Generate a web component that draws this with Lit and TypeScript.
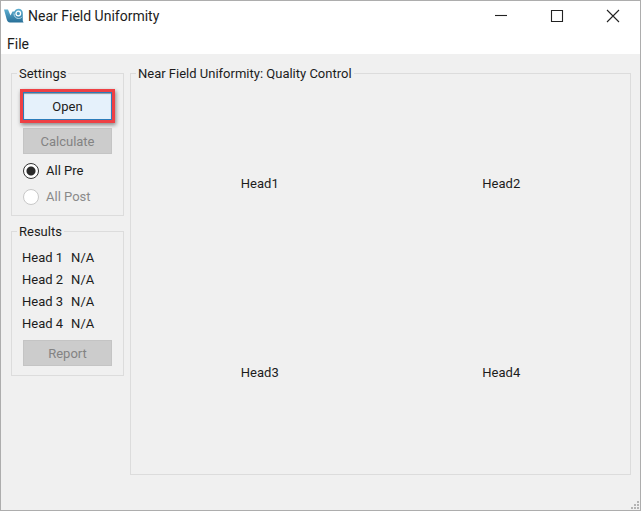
import { LitElement, html, css, svg } from "lit";
import { customElement, state } from "lit/decorators.js";

type Pass = "pre" | "post";

@customElement("app-root")
export class AppRoot extends LitElement {
  static styles = css`
    :host {
      display: block;
      color: #1c1c1c;
      font: 13px/18px Roboto, "Noto Sans", sans-serif;
    }
    .window {
      box-sizing: border-box;
      min-height: 100vh;
      display: flex;
      flex-direction: column;
      border: 1px solid #adadad;
      background: #f0f0f0;
    }
    .titlebar {
      display: flex;
      align-items: center;
      height: 30px;
      padding-left: 3px;
      background: #fff;
    }
    .logo {
      width: 20px;
      height: 16px;
      margin-right: 4px;
    }
    .title {
      flex: 1;
      margin: 0;
      font-size: 14px;
      font-weight: 400;
      line-height: 20px;
    }
    .caption {
      box-sizing: border-box;
      width: 56px;
      height: 30px;
      padding: 0 0 0 2px;
      border: 0;
      background: none;
      display: grid;
      place-items: center;
    }
    .menubar {
      height: 23px;
      padding-left: 6px;
      background: #fff;
    }
    .menu {
      padding: 0;
      border: 0;
      background: none;
      color: inherit;
      font: inherit;
      font-size: 14px;
      line-height: 26px;
    }
    .content {
      flex: 1;
      display: flex;
      gap: 6px;
      padding: 9px 9px 0 10px;
    }
    .sidebar {
      width: 113px;
      flex: none;
      display: flex;
      flex-direction: column;
      gap: 5px;
    }
    .group {
      margin: 0;
      min-width: 0;
      border: 1px solid #dcdcdc;
      padding: 9px 11px;
    }
    .settings {
      padding-bottom: 5px;
    }
    .legend {
      margin-left: -6px;
      padding: 2px 2px 0;
    }
    .viewer {
      flex: 1;
      display: grid;
      grid-template: 1fr 1fr / 1fr 1fr;
      gap: 6px;
    }
    .head {
      display: grid;
      place-items: center;
    }
    .button {
      display: block;
      box-sizing: border-box;
      width: 100%;
      height: 26px;
      padding: 2px 0 0;
      border: 1px solid #c4c4c4;
      background: #cccccc;
      color: #838383;
      font: inherit;
    }
    .open {
      height: 28px;
      margin-bottom: 8px;
      border-color: #2b7cba;
      background: #e5f1fb;
      color: #1c1c1c;
      outline: 3px solid #ee4044;
      box-shadow: 1px 2px 4px 3px #00000070, inset 0 1px 1px #00000060;
    }
    .radios {
      margin-top: 4px;
    }
    .radio {
      display: flex;
      align-items: center;
      gap: 7px;
      height: 26px;
    }
    .radio.off {
      color: #8a8a8a;
    }
    .dot {
      appearance: none;
      box-sizing: border-box;
      width: 16px;
      height: 16px;
      margin: 0;
      border: 1px solid #333;
      border-radius: 50%;
      background: #fff;
    }
    .dot:checked {
      background: radial-gradient(circle, #2a2a2a 4px, #fff 5px);
    }
    .dot:disabled {
      border-color: #c8c8c8;
    }
    .results {
      margin: -3px 0 5px -1px;
      border-collapse: collapse;
    }
    .results th,
    .results td {
      height: 22px;
      padding: 0 8px 0 0;
      font-weight: 400;
      text-align: left;
    }
    .status {
      height: 35px;
      display: flex;
      align-items: flex-end;
      justify-content: flex-end;
    }
    .grip {
      width: 10px;
      height: 10px;
    }
  `;

  @state() private pass: Pass = "pre";

  private results = [1, 2, 3, 4].map((n) => ({ n, value: "N/A" }));

  private logo() {
    return svg`<svg class="logo" viewBox="0 0 20 16" aria-hidden="true">
      <defs>
        <linearGradient id="blue" x1="0" y1="0" x2="0" y2="1">
          <stop offset="0" stop-color="#5fb0d2"></stop>
          <stop offset="1" stop-color="#286f98"></stop>
        </linearGradient>
      </defs>
      <path fill="url(#blue)" d="M0 1.500h4l2.500 6L8.500 3.500h1.800C11 2 12.500 .8 14.500 .8c2.700 0 4.300 1.700 4.300 4.200v8l.8 1.500H6C4 14.500 3.200 13 2.600 11z"></path>
      <circle cx="14.300" cy="5.500" r="2.300" fill="none" stroke="#fff" stroke-width="1.300"></circle>
      <path fill="none" stroke="#c9e3ef" stroke-width=".9" d="M10 5.500c0 3.200 2 5 4.600 5 1.500 0 2.700-.6 3.400-1.700"></path>
    </svg>`;
  }

  private grip() {
    const dots = [[8, 1], [5, 4], [8, 4], [2, 7], [5, 7], [8, 7]];
    return svg`<svg class="grip" viewBox="0 0 10 10" aria-hidden="true">
      ${dots.map(([x, y]) => svg`<rect x=${x - 1} y=${y} width="2" height="2" fill="#b4b4b4"></rect>`)}
    </svg>`;
  }

  private caption(label: string, d: string) {
    return html`<button class="caption" aria-label=${label}>
      <svg width="14" height="14" viewBox="0 0 14 14" fill="none" stroke="#222" stroke-width="1.100"><path d=${d}></path></svg>
    </button>`;
  }

  private radio(value: Pass, label: string, disabled = false) {
    return html`<label class="radio ${disabled ? "off" : ""}">
      <input class="dot" type="radio" name="pass" .checked=${this.pass === value} ?disabled=${disabled}
        @change=${() => (this.pass = value)} />${label}
    </label>`;
  }

  render() {
    return html`<div class="window">
      <header class="titlebar">
        ${this.logo()}
        <h1 class="title">Near Field Uniformity</h1>
        ${this.caption("Minimize", "M1 6.500h12")}
        ${this.caption("Maximize", "M1.500 1.500h11v11h-11z")}
        ${this.caption("Close", "M1 1l12 12M13 1L1 13")}
      </header>
      <nav class="menubar"><button class="menu">File</button></nav>
      <main class="content">
        <div class="sidebar">
          <fieldset class="group settings">
            <legend class="legend">Settings</legend>
            <button class="button open">Open</button>
            <button class="button" disabled>Calculate</button>
            <div class="radios">${this.radio("pre", "All Pre")}${this.radio("post", "All Post", true)}</div>
          </fieldset>
          <fieldset class="group">
            <legend class="legend">Results</legend>
            <table class="results">
              ${this.results.map((r) => html`<tr><th scope="row">Head ${r.n}</th><td>${r.value}</td></tr>`)}
            </table>
            <button class="button" disabled>Report</button>
          </fieldset>
        </div>
        <fieldset class="group viewer">
          <legend class="legend">Near Field Uniformity: Quality Control</legend>
          ${this.results.map((r) => html`<div class="head">Head${r.n}</div>`)}
        </fieldset>
      </main>
      <footer class="status">${this.grip()}</footer>
    </div>`;
  }
}
